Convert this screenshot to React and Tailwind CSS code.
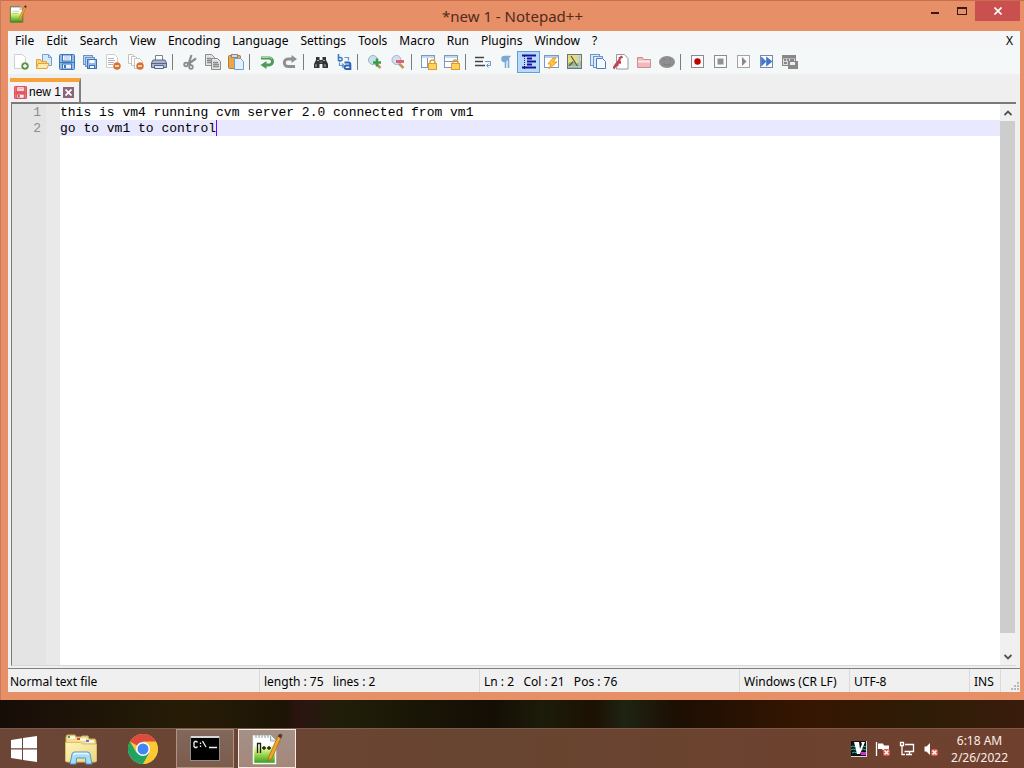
import React, { useState } from 'react';

const Svg = ({ size = 16, children }) => (
  <svg width={size} height={size} viewBox="0 0 16 16" fill="none" aria-hidden="true" className="shrink-0">
    {children}
  </svg>
);

const Page = ({ x = 2, y = 1, w = 10, h = 13, stroke = '#b8b8b8', fill = '#fff' }) => (
  <path
    d={`M${x + 0.5} ${y + 0.5}h${w - 3}l3 3v${h - 3}h${-w}z`}
    fill={fill}
    stroke={stroke}
  />
);

const Floppy = ({ color = '#3f74b8', light = '#8fbcf0' }) => (
  <>
    <rect x="0.5" y="0.5" width="15" height="15" rx="1" fill={light} stroke={color} />
    <rect x="3.5" y="1" width="9" height="6" fill="#fff" stroke={color} />
    <path d="M5 3h6M5 5h6" stroke={color} strokeOpacity="0.5" />
    <path d="M1 8.5h14" stroke={color} />
    <rect x="3.5" y="10" width="9" height="5" fill="#eef5ff" stroke={color} />
    <rect x="5" y="11" width="2" height="3" fill={color} />
  </>
);

const Badge = ({ color, plus }) => (
  <>
    <circle cx="12" cy="12" r="3.5" fill={color} stroke={color} strokeOpacity="0.5" />
    <path d={plus ? 'M10 12h4M12 10v4' : 'M10 12h4'} stroke="#fff" strokeWidth="1.3" />
  </>
);

const Lock = () => (
  <>
    <path d="M9 10V8.5a2.5 2.5 0 0 1 5 0V10" stroke="#d9a13a" strokeWidth="1.4" />
    <rect x="7.5" y="9.5" width="8" height="6" fill="#ffd55e" stroke="#e09a2c" />
  </>
);

const RecordFrame = ({ children, stroke = '#8b8b93' }) => (
  <Svg>
    <rect x="1.5" y="1.5" width="12" height="12" fill="#fafafa" stroke={stroke} />
    {children}
  </Svg>
);

const icons = {
  new: (
    <Svg>
      <Page x={1} y={0} w={11} h={14} stroke="#cfcfcf" />
      <Badge color="#5e9440" plus />
    </Svg>
  ),
  open: (
    <Svg>
      <path d="M6.5 .5h6l3 3v8h-9z" fill="#d6e9fd" stroke="#6f9fd8" />
      <path d="M12.5 .5v3h3" stroke="#6f9fd8" />
      <path d="M.5 14.5v-9h4l1 2h5v7z" fill="#fbd37a" stroke="#e0a43a" />
      <path d="M.5 14.5l1.5-5h11l-2 5z" fill="#ffe9a8" stroke="#e0a43a" />
    </Svg>
  ),
  save: <Svg><Floppy /></Svg>,
  saveAll: (
    <Svg>
      <rect x="1.5" y="1.5" width="9" height="9" fill="#b9d4f4" stroke="#6d93c6" />
      <rect x="3.5" y="3.5" width="9" height="9" fill="#b9d4f4" stroke="#6d93c6" />
      <rect x="5.5" y="5.5" width="9" height="9" fill="#8fb8ec" stroke="#3f70b4" />
      <rect x="7.5" y="6" width="5" height="3" fill="#fff" />
      <rect x="7.5" y="11.5" width="5" height="3" fill="#fff" stroke="#3f70b4" />
    </Svg>
  ),
  close: (
    <Svg>
      <Page x={1} y={0} w={11} h={13} stroke="#cfcfcf" />
      <path d="M3 4.5h6M3 6.5h7M3 8.5h6M3 10.5h5" stroke="#b5b5b5" />
      <Badge color="#d9702d" />
    </Svg>
  ),
  closeAll: (
    <Svg>
      <Page x={0} y={0} w={7} h={9} stroke="#c2c2c2" />
      <Page x={3} y={2} w={7} h={9} stroke="#c2c2c2" />
      <Page x={6} y={4} w={8} h={10} stroke="#c2c2c2" />
      <Badge color="#d9702d" />
    </Svg>
  ),
  print: (
    <Svg>
      <path d="M4.5 7V1.5h7V7" fill="#fff" stroke="#7a7f92" />
      <path d="M2 6h12l1.5 3v4.5H.5V9z" fill="#aab4cc" stroke="#5d6480" />
      <path d="M1 9.5h14" stroke="#5d6480" />
      <path d="M3.5 11.5h9v3h-9z" fill="#d9e8fb" stroke="#5d6480" />
    </Svg>
  ),
  cut: (
    <Svg>
      <path d="M9.5 1L6.5 10M14 4.500L5.5 10.500" stroke="#8c8c8c" strokeWidth="2.2" />
      <circle cx="4" cy="10.5" r="1.8" stroke="#8c8c8c" strokeWidth="1.8" />
      <circle cx="9" cy="13" r="1.8" stroke="#8c8c8c" strokeWidth="1.8" />
      <path d="M7 9l2 2.5" stroke="#8c8c8c" strokeWidth="1.8" />
    </Svg>
  ),
  copy: (
    <Svg>
      <Page x={0} y={0} w={9} h={11} stroke="#8c8c8c" fill="#e4e4e4" />
      <path d="M2 4.5h4M2 6.5h5M2 8.5h5" stroke="#8c8c8c" strokeWidth="1.3" />
      <Page x={6} y={4} w={9} h={11} stroke="#8c8c8c" fill="#e4e4e4" />
      <path d="M8 8.5h5M8 10.5h6M8 12.5h6" stroke="#8c8c8c" strokeWidth="1.3" />
    </Svg>
  ),
  paste: (
    <Svg>
      <rect x="0.5" y="1.5" width="12" height="13" rx="1" fill="#e9a64a" stroke="#b87b2c" />
      <rect x="3.5" y="0.5" width="6" height="3" fill="#d8d8d8" stroke="#8a8a8a" />
      <Page x={6} y={4} w={9} h={11} stroke="#6f9fd8" fill="#e4f0fd" />
    </Svg>
  ),
  undo: (
    <Svg>
      <path d="M2 4h8a3.5 3.5 0 0 1 0 7H6" stroke="#4d9b58" strokeWidth="3" />
      <path d="M7.5 7v8L1.500 11z" fill="#4d9b58" />
      <path d="M2.5 3.500h8a3.5 3.5 0 0 1 2.5 1.5" stroke="#9fd8a0" />
    </Svg>
  ),
  redo: (
    <Svg>
      <path d="M13 12.500H6a3.7 3.7 0 0 1 0-7.4h4" stroke="#909090" strokeWidth="3" />
      <path d="M9.5 1v8L15 5z" fill="#909090" />
    </Svg>
  ),
  find: (
    <Svg>
      <path d="M3 3h3.5v3h3V3H13v3l2 4v4H9.5v-4h-3v4H1v-4l2-4z" fill="#333" />
      <path d="M4 6.5h2M10 6.5h2M3 10v3M12 10v3" stroke="#b0b0b0" />
      <path d="M6.5 8h3" stroke="#777" />
    </Svg>
  ),
  replace: (
    <Svg>
      <path d="M2.5 0v7M2.5 3.500h2a1.7 1.7 0 0 1 0 3.400h-2" stroke="#3c78c0" strokeWidth="1.6" />
      <path d="M8.500 8.500h4q1.800 0 1.800 1.800V15h-4a1.800 1.800 0 0 1 0-3.600h4" stroke="#2e62b4" strokeWidth="2" />
      <path d="M3.5 8.5v3h4M6 9.500l2 2-2 2M8.5 3.500h4v3" stroke="#5f94cc" strokeWidth="1.2" />
    </Svg>
  ),
  zoomIn: (
    <Svg>
      <path d="M8.5 9l5 5" stroke="#c49354" strokeWidth="2.5" />
      <circle cx="6" cy="6" r="4.5" fill="#c4e3ef" stroke="#a0b0b8" />
      <path d="M10 4.500v8M6 8.500h8" stroke="#3c9a4b" strokeWidth="2.6" />
    </Svg>
  ),
  zoomOut: (
    <Svg>
      <path d="M8.5 9l5 5" stroke="#c49354" strokeWidth="2.5" />
      <circle cx="6.5" cy="6" r="4.5" fill="#d3dff2" stroke="#a9b2c8" />
      <path d="M6 7.5h8" stroke="#e0596a" strokeWidth="2.8" />
    </Svg>
  ),
  syncV: (
    <Svg>
      <rect x="0.5" y="1.5" width="13" height="12" fill="#fff" stroke="#7e98bd" />
      <path d="M1 3h12" stroke="#c5d7ee" strokeWidth="2" />
      <path d="M6.500 4v10" stroke="#7e98bd" />
      <Lock />
    </Svg>
  ),
  syncH: (
    <Svg>
      <rect x="0.5" y="1.5" width="13" height="12" fill="#fff" stroke="#7e98bd" />
      <path d="M1 3h12" stroke="#c5d7ee" strokeWidth="2" />
      <path d="M1 7.500h12" stroke="#7e98bd" />
      <Lock />
    </Svg>
  ),
  wrap: (
    <Svg>
      <path d="M0 3.5h9M0 7.5h8M0 11.5h10" stroke="#444" strokeWidth="1.3" />
      <path d="M10 7.500h5.5v4H12M13.5 9.500l-2 2 2 2" stroke="#6f94c4" />
    </Svg>
  ),
  pilcrow: (
    <Svg>
      <path d="M11.500 2.500H6.5a2.500 2.500 0 0 0 0 5H7.500zM7.500 2v12M10.500 2v12" fill="#79a8d4" stroke="#79a8d4" strokeWidth="1.6" />
    </Svg>
  ),
  indent: (
    <Svg>
      <path d="M1 1.5h14M6 4.5h5M6 7.500h9M6 10.5h5M1 13.5h14" stroke="#1414a0" strokeWidth="1.8" />
      <path d="M3.5 2v13" stroke="#1414a0" strokeDasharray="1 1" />
    </Svg>
  ),
  userLang: (
    <Svg>
      <rect x="0.5" y="1.5" width="14" height="12" fill="#fff" stroke="#7e98bd" />
      <path d="M1 3h13" stroke="#b4cdec" strokeWidth="2" />
      <path d="M9 4L4 10h3l-2 5 8-7H9l3-4z" fill="#ffc93f" stroke="#e89b28" />
    </Svg>
  ),
  docMap: (
    <Svg>
      <rect x="0.5" y="0.5" width="14" height="14" fill="#e8dc7b" stroke="#6c7382" />
      <path d="M1 9l5-2 3 3 5-3v7H1z" fill="#9ebc84" />
      <path d="M4 2l7 11M2 12l4-4" stroke="#5a5a5a" strokeWidth="1.3" />
      <path d="M12 1v8l-4-5z" fill="#c9d8b0" />
      <path d="M12.5 1v13M1 12.5h13" stroke="#a9c6e6" />
    </Svg>
  ),
  docList: (
    <Svg>
      <rect x="0.5" y="0.5" width="9" height="11" fill="#dce9f9" stroke="#6f96c8" />
      <rect x="3.5" y="2.5" width="9" height="11" fill="#dce9f9" stroke="#6f96c8" />
      <Page x={6} y={4} w={9} h={10} stroke="#4b7fc0" fill="#f4f9ff" />
    </Svg>
  ),
  funcList: (
    <Svg>
      <path d="M3.5 0.500h8l3.500 4v10.500h-11.5z" fill="#fff" stroke="#999" />
      <path d="M0.500 14.500l2.500-4 2.500 1M3 11.500L7 5M6 4.500l3.500-2M4 8.500h4" stroke="#c04354" strokeWidth="2.4" />
    </Svg>
  ),
  folder: (
    <Svg>
      <path d="M1.5 13.500v-10h5l1 2h7v8z" fill="#f1b9bd" stroke="#d68a90" />
      <path d="M2 7.500h12" stroke="#fbe8e8" strokeWidth="2" />
    </Svg>
  ),
  monitor: (
    <Svg>
      <ellipse cx="8" cy="8" rx="8" ry="6" fill="#8f8f8f" />
      <path d="M4 6l2-1M10 5l2 1M4 10q4 2 8 0" stroke="#7c7c7c" />
    </Svg>
  ),
  record: <RecordFrame><circle cx="7.5" cy="7.5" r="3.2" fill="#c00000" /></RecordFrame>,
  stop: <RecordFrame><rect x="4.5" y="4.5" width="6" height="6" fill="#909090" /></RecordFrame>,
  play: <RecordFrame stroke="#a5a5a5"><path d="M6 3l4.5 4.5L6 12z" fill="#888" /></RecordFrame>,
  playMulti: (
    <RecordFrame stroke="#7888a8">
      <path d="M2.500 3l4.500 4.500L2.500 12zM7.500 3l5.500 4.500L7.500 12z" fill="#3d78d0" stroke="#275aa8" strokeWidth="0.5" />
    </RecordFrame>
  ),
  saveMacro: (
    <Svg>
      <rect x="0.5" y="1.5" width="13" height="10" fill="#ddd" stroke="#888" />
      <path d="M1 3h13" stroke="#888" strokeWidth="3" />
      <path d="M2 6h2M5 6h2M8 6h4M2 9h3" stroke="#888" strokeWidth="1.8" />
      <rect x="6" y="7" width="10" height="8" fill="#888" />
      <rect x="8" y="8" width="5" height="3" fill="#eee" />
    </Svg>
  )
};

const toolbar = [
  ['new', 'open', 'save', 'saveAll', 'close', 'closeAll', 'print'],
  ['cut', 'copy', 'paste'],
  ['undo', 'redo'],
  ['find', 'replace'],
  ['zoomIn', 'zoomOut'],
  ['syncV', 'syncH'],
  ['wrap', 'pilcrow', 'indent', 'userLang', 'docMap', 'docList', 'funcList', 'folder', 'monitor'],
  ['record', 'stop', 'play', 'playMulti', 'saveMacro']
];

const menus = [
  'File', 'Edit', 'Search', 'View', 'Encoding', 'Language', 'Settings',
  'Tools', 'Macro', 'Run', 'Plugins', 'Window', '?'
];

const NotepadIcon = ({ size, label }) => (
  <svg width={size} height={size} viewBox="0 0 32 32" aria-hidden="true" className="shrink-0">
    <defs>
      <linearGradient id="padGreen" x1="0" y1="0" x2="0" y2="1">
        <stop offset="0.3" stopColor="#ffffff" />
        <stop offset="0.55" stopColor="#c8ec6a" />
        <stop offset="1" stopColor="#2f9a1c" />
      </linearGradient>
    </defs>
    <path d="M2.500 3h17l5 5v22.500h-22z" fill="url(#padGreen)" stroke={label ? '#f4faf0' : '#56703c'} strokeWidth="1.500" />
    <path d="M5 1v4M8 1v4M11 1v4M14 1v4M17 1v4" stroke="#8a9a9a" />
    <path d="M19.500 3v5h5" fill="#dfe8f0" stroke="#9aa8a8" />
    <path d="M27 3l3 2-9 20-4 3 1-5z" fill="#f0a62e" stroke="#a86a18" strokeWidth="0.8" />
    <path d="M27 3l3 2 1-3-2-1z" fill="#5b3a34" stroke="#5b3a34" />
    {label && (
      <path d="M6.500 20v-9.500h3V20M11 15h4M13 13v4M16 15h4M18 13v4" fill="none" stroke="#1c1c1c" strokeWidth="1.3" />
    )}
    {!label && <path d="M6 11h12M6 15h10" stroke="#98b070" />}
  </svg>
);

const WindowsLogo = () => (
  <svg width="26" height="26" viewBox="0 0 26 26" aria-hidden="true">
    <path d="M0 4l11-1.700V12.300H0zM12 2.100L26 0v12.300H12zM0 13.500h11v10.200L0 22zM12 13.500h14V26l-14-2.100z" fill="#fff" />
  </svg>
);

const ExplorerIcon = () => (
  <svg width="34" height="32" viewBox="0 0 34 32" aria-hidden="true">
    <defs>
      <linearGradient id="folderFront" x1="0" y1="0" x2="1" y2="1">
        <stop offset="0" stopColor="#fff3b8" />
        <stop offset="1" stopColor="#ecd680" />
      </linearGradient>
    </defs>
    <path d="M2 27V4l1-2h8l1 2h5l1-1h6l1 3h6l1 2v19z" fill="#f3dc8c" stroke="#cdae5c" />
    <path d="M4 4.500h7M13 6.500h9M22 8.500h8" stroke="#fff" strokeWidth="2" />
    <path d="M4 4h2" stroke="#3fa060" strokeWidth="2" />
    <path d="M13 6h3" stroke="#d04838" strokeWidth="2" />
    <path d="M22 8h3" stroke="#3d88d0" strokeWidth="2" />
    <path d="M1.500 9.500h15l2 1.500h14v17l-1 1h-29l-1-1z" fill="url(#folderFront)" stroke="#d9bd66" />
    <path d="M6 31l2-10q.500-2 2.500-2h13q2 0 2.500 2l2 10h-6l-.5-6h-9L12 31z" fill="#a9dcf6" stroke="#4a9ccc" />
    <path d="M9.500 22q.500-1.500 2-1.500h11q1.500 0 2 1.500" fill="none" stroke="#e9f9ff" strokeWidth="1.5" />
  </svg>
);

const ChromeIcon = () => (
  <svg width="30" height="30" viewBox="0 0 30 30" aria-hidden="true">
    <circle cx="15" cy="15" r="15" fill="#fbc935" />
    <path d="M15 15L2 7.500A15 15 0 0 1 28 7.500H15z" fill="#dd4b3e" />
    <path d="M2 7.500A15 15 0 0 0 15 30l6.500-11.250L15 15 8.500 18.750z" fill="#1fa463" />
    <path d="M15 8h13a15 15 0 0 1-13 22l6.500-11.250z" fill="#fcc935" />
    <circle cx="15" cy="15" r="7" fill="#fff" />
    <circle cx="15" cy="15" r="5.500" fill="#4286f5" />
  </svg>
);

const ConsoleIcon = () => (
  <svg width="30" height="25" viewBox="0 0 30 25" aria-hidden="true">
    <rect x="0.5" y="0.5" width="29" height="24" fill="#000" stroke="#8c8c8c" />
    <path d="M1 1h28" stroke="#d8d8d8" strokeWidth="2" />
    <path
      d="M7.500 6.500l-1-1H5l-1 1v4l1 1h1.500l1-1M10.500 6.500v1.500M10.500 9.500V11M12.500 5l3.500 6M19 11.500h8"
      fill="none"
      stroke="#f0f0f0"
      strokeWidth="1.3"
    />
  </svg>
);

const taskbarApps = [
  { name: 'File Explorer', icon: <ExplorerIcon />, style: 'border-transparent' },
  { name: 'Google Chrome', icon: <ChromeIcon />, style: 'border-transparent' },
  { name: 'Command Prompt', icon: <ConsoleIcon />, style: 'border-[#b3937f] bg-linear-to-b from-[#80685c] to-[#7c5c4c]' },
  { name: 'Notepad++', icon: <NotepadIcon size={32} label />, style: 'border-[#fbe9de] bg-linear-to-b from-[#a39188] to-[#a5877a]' }
];

const RedCross = () => (
  <>
    <rect x="8" y="8" width="7" height="7" rx="2" fill="#d9574f" />
    <path d="M9.5 9.500l4 4M13.5 9.500l-4 4" stroke="#fff" strokeWidth="1.5" />
  </>
);

const trayIcons = [
  {
    name: 'VNC Server',
    icon: (
      <Svg>
        <rect width="16" height="16" fill="#d8d8d8" />
        <rect x="0" y="0" width="15" height="15" fill="#101010" />
        <path d="M0 6q2-2 4 0M0 9q2-2 5 0M1 12q2-2 5 0M10 6q3-2 5 0M10 9q2-2 5 0" stroke="#22c0b0" />
        <path d="M3 1h5l1 7 2-5-1-2h4l-5 12H6z" fill="#fff" />
        <rect x="10" y="11" width="5" height="3" fill="#d030d8" />
      </Svg>
    )
  },
  {
    name: 'Action Center',
    icon: (
      <Svg>
        <path d="M1.500 1v14" stroke="#fff" strokeWidth="1.3" />
        <path d="M3 2.500h5l1 2h5v5H8l-1-1.500H3z" fill="#fff" />
        <RedCross />
      </Svg>
    )
  },
  {
    name: 'Network',
    icon: (
      <Svg>
        <path d="M6 3.500h8.500v7H5.500M10.500 11v2.500M7 13.500h6" stroke="#fff" strokeWidth="1.3" />
        <path d="M1.500 1.500h3v3h-3zM3 5v8.500h3" stroke="#fff" strokeWidth="1.3" />
      </Svg>
    )
  },
  {
    name: 'Volume muted',
    icon: (
      <Svg>
        <path d="M1.500 5.500h2L7 2v12l-3.500-3.500h-2z" fill="#fff" />
        <RedCross />
      </Svg>
    )
  }
];

const TitleBar = () => (
  <header className="relative flex h-[31px] shrink-0 items-center justify-center border-t border-[#c96d4c]">
    <div className="absolute top-1 left-2">
      <NotepadIcon size={18} />
    </div>
    <h1 className="text-[15px] leading-5 text-[#4f2b20]">*new 1 - Notepad++</h1>
    <div className="absolute top-0 right-1 flex h-5">
      <button aria-label="Minimize" className="flex w-[27px] items-center justify-center pt-1">
        <span className="h-[2px] w-2 bg-[#3a1a10]"></span>
      </button>
      <button aria-label="Maximize" className="flex w-[27px] items-center justify-center">
        <span className="h-2 w-[10px] border border-t-2 border-[#3a1a10]"></span>
      </button>
      <button aria-label="Close" className="flex w-[45px] items-center justify-center bg-[#c9504f]">
        <svg width="8" height="8" viewBox="0 0 8 8" aria-hidden="true">
          <path d="M0.5 0.5l7 7M7.5 0.5l-7 7" stroke="#fff" strokeWidth="1.6" />
        </svg>
      </button>
    </div>
  </header>
);

const Toolbar = () => (
  <div role="toolbar" aria-label="Main toolbar" className="flex h-6 shrink-0 items-center bg-[#f4f8f9] pl-px">
    {toolbar.map((group, index) => (
      <React.Fragment key={group[0]}>
        {index > 0 && (
          <span className="flex w-2 pl-[2px]">
            <span className="h-4 w-px bg-[#777c7c]"></span>
          </span>
        )}
        {group.map((name) => (
          <button
            key={name}
            aria-label={name}
            className={`flex h-[22px] w-[23px] items-center justify-center border ${
              name === 'indent' ? 'border-[#5f9fe0] bg-[#bcdaf5]' : 'border-transparent'
            }`}
          >
            {icons[name]}
          </button>
        ))}
      </React.Fragment>
    ))}
  </div>
);

const TabBar = () => (
  <div className="flex h-7 shrink-0 items-end bg-[#efefef] pl-[2px]">
    <div className="flex h-6 w-[71px] items-center border-t-4 border-r-2 border-t-[#f5a33a] border-r-[#808080] bg-[#f4f2f4] pl-1">
      <Svg size={13}>
        <Floppy color="#d83c44" light="#f07078" />
      </Svg>
      <span className="ml-[2px] w-[34px] font-['Liberation_Sans',sans-serif] text-[12px] leading-4 text-black">new 1</span>
      <button aria-label="Close tab" className="flex h-[11px] w-[11px] items-center justify-center bg-[#8a6478]">
        <svg width="7" height="7" viewBox="0 0 7 7" aria-hidden="true">
          <path d="M0.5 0.5l6 6M6.5 0.5l-6 6" stroke="#fff" strokeWidth="1.8" />
        </svg>
      </button>
    </div>
  </div>
);

const ScrollBar = () => (
  <div className="flex w-4 shrink-0 flex-col bg-[#f0f0f0]">
    <button aria-label="Scroll up" className="flex h-[17px] items-center justify-center">
      <svg width="8" height="6" viewBox="0 0 8 6" fill="none" aria-hidden="true">
        <path d="M0.5 5L4 1.5 7.5 5" stroke="#505050" strokeWidth="1.8" />
      </svg>
    </button>
    <div className="mr-px flex-1 bg-[#cdcdcd]"></div>
    <div className="h-[15px]"></div>
    <button aria-label="Scroll down" className="flex h-[17px] items-center justify-center">
      <svg width="8" height="6" viewBox="0 0 8 6" fill="none" aria-hidden="true">
        <path d="M0.5 1L4 4.5 7.5 1" stroke="#505050" strokeWidth="1.8" />
      </svg>
    </button>
  </div>
);

const Editor = () => {
  const [text, setText] = useState(
    'this is vm4 running cvm server 2.0 connected from vm1\ngo to vm1 to control'
  );
  const lines = text.split('\n');

  return (
    <main className="flex min-h-0 flex-1 bg-[#efefef] pr-1 pb-[2px] pl-[3px]">
      <div className="flex flex-1 border-t-2 border-b border-l border-[#7a7a7a] border-b-[#d8d8d8] bg-white font-['Liberation_Mono',monospace] text-[13px] leading-4">
        <div className="w-[34px] bg-[#e4e4e4] pt-px pr-[5px] text-right text-[#8c8c8c]">
          {lines.map((line, index) => (
            <div key={index}>{index + 1}</div>
          ))}
        </div>
        <div className="w-[14px] bg-[#e9e9e9]"></div>
        <div className="relative flex flex-1">
          {/* Current line highlight and caret */}
          <div className="absolute inset-x-0 top-4 h-4 bg-[#e8e8ff]"></div>
          <div className="absolute top-4 left-[20ch] h-4 w-px bg-[#8000ff]"></div>
          <textarea
            aria-label="Document text"
            spellCheck={false}
            value={text}
            onChange={(e) => setText(e.target.value)}
            className="relative flex-1 resize-none overflow-hidden bg-transparent pt-px whitespace-pre text-black outline-none"
          />
        </div>
        <ScrollBar />
      </div>
    </main>
  );
};

const StatusBar = () => (
  <footer className="flex h-6 shrink-0 items-stretch border-t border-[#808080] bg-[#f0f0f0] text-[12px] leading-[25px] whitespace-pre text-black">
    <div className="flex-1 pl-[2px]">Normal text file</div>
    <div className="w-[220px] border-l border-[#d9d9d9] pl-1">length : 75   lines : 2</div>
    <div className="w-[260px] border-l border-[#d9d9d9] pl-1">Ln : 2   Col : 21   Pos : 76</div>
    <div className="w-[110px] border-l border-[#d9d9d9] pl-1">Windows (CR LF)</div>
    <div className="w-[120px] border-l border-[#d9d9d9] pl-1">UTF-8</div>
    <div className="w-[31px] border-l border-[#d9d9d9] pl-1">INS</div>
    <div className="flex w-5 items-end justify-end border-l border-[#d9d9d9]">
      <svg width="10" height="10" viewBox="0 0 10 10" fill="#b8b8b8" aria-hidden="true">
        <path d="M7 0h2v2H7zM4 3h2v2H4zM7 3h2v2H7zM1 6h2v2H1zM4 6h2v2H4zM7 6h2v2H7z" />
      </svg>
    </div>
  </footer>
);

const Taskbar = () => (
  <nav
    aria-label="Taskbar"
    className="flex h-10 shrink-0 items-stretch gap-1 border-t border-[#7b5b4a] bg-linear-to-r from-[#6b4536] via-[#684530] to-[#70402f]"
  >
    <button aria-label="Start" className="flex w-12 items-center justify-center">
      <WindowsLogo />
    </button>
    {taskbarApps.map((app) => (
      <button key={app.name} aria-label={app.name} className={`flex w-[58px] items-center justify-center border ${app.style}`}>
        {app.icon}
      </button>
    ))}
    <div className="ml-auto flex items-center gap-2 pr-4">
      {trayIcons.map((item) => (
        <button key={item.name} aria-label={item.name}>
          {item.icon}
        </button>
      ))}
      <time className="ml-1 text-center text-[12px] leading-[17px] text-[#fbeee6]">
        6:18 AM
        <br />
        2/26/2022
      </time>
    </div>
  </nav>
);

const App = () => {
  return (
    <div className="flex h-screen flex-col overflow-hidden bg-[linear-gradient(to_right,#170d08,#261c06_18%,#1e1406_28%,#2b1410_29%,#2a1610_30%,#201e08_33%,#140e04_48%,#1c1c0a_53%,#1c1002_58%,#1e2412_61%,#1c0e02_66%,#361602_79%,#2e1c06_90%,#3a1c0c)] font-['Noto_Sans',sans-serif]">
      <div className="mb-7 flex min-h-0 flex-1 flex-col border-l border-[#c97a5c] bg-[#e78f66]">
        <TitleBar />
        <div className="mr-1 mb-2 ml-[7px] flex min-h-0 flex-1 flex-col">
          <nav aria-label="Menu bar" className="flex h-[19px] shrink-0 items-center bg-[#f5f6f7] pl-px text-[12px] leading-[19px] text-black">
            {menus.map((menu) => (
              <button key={menu} className="px-[6px]">
                {menu}
              </button>
            ))}
            <button aria-label="Close document" className="ml-auto px-[7px]">
              X
            </button>
          </nav>
          <Toolbar />
          <TabBar />
          <Editor />
          <StatusBar />
        </div>
      </div>
      <Taskbar />
    </div>
  );
};

export default App;
